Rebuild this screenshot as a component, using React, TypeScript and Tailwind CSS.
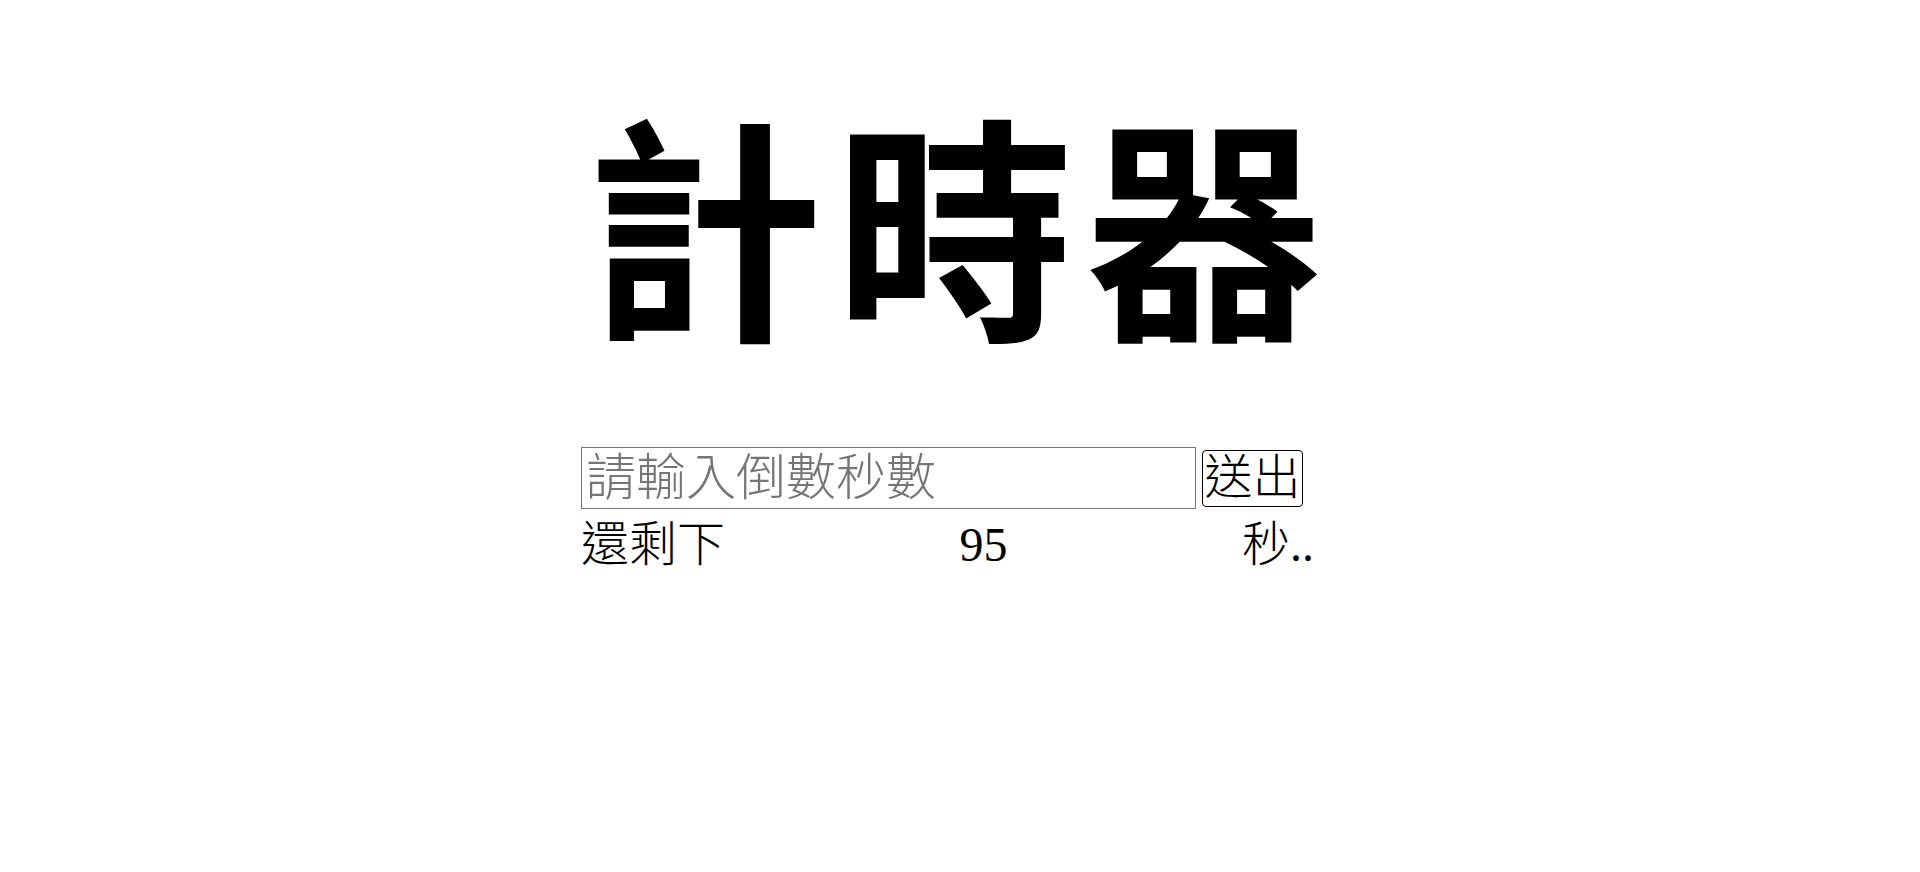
import React, { useState } from "react";

export default function App() {
  const [value, setValue] = useState("");
  return (
    <div className="min-h-[872px] w-full bg-white text-black">
      <h1
        className="pt-[99px] text-center text-[238px] leading-[240px] tracking-[12px] font-bold text-black"
        style={{ fontFamily: '"Noto Sans CJK TC", "Noto Sans CJK SC", sans-serif' }}
      >
        計時器
      </h1>
      <div
        className="pl-[581px] pt-[108px]"
        style={{ fontFamily: '"Liberation Serif", "Noto Sans CJK TC", serif' }}
      >
        <div className="flex w-[722px] items-center gap-[6px]">
          <input
            value={value}
            onChange={(e) => setValue(e.target.value)}
            placeholder="請輸入倒數秒數"
            className="h-[62px] w-[615px] border border-[#767676] bg-white px-[4px] text-[50px] font-light leading-[58px] text-black placeholder:text-[#757575] outline-none"
          />
          <button className="h-[57px] w-[101px] rounded-[4px] border border-[#000000] bg-white px-[1px] text-[48px] font-light leading-[52px] text-black">
            送出
          </button>
        </div>
        <div className="mt-[8px] flex w-[733px] items-center justify-between text-[48px] font-light leading-[56px] text-black">
          <span>還剩下</span>
          <span>95</span>
          <span>秒..</span>
        </div>
      </div>
    </div>
  );
}
